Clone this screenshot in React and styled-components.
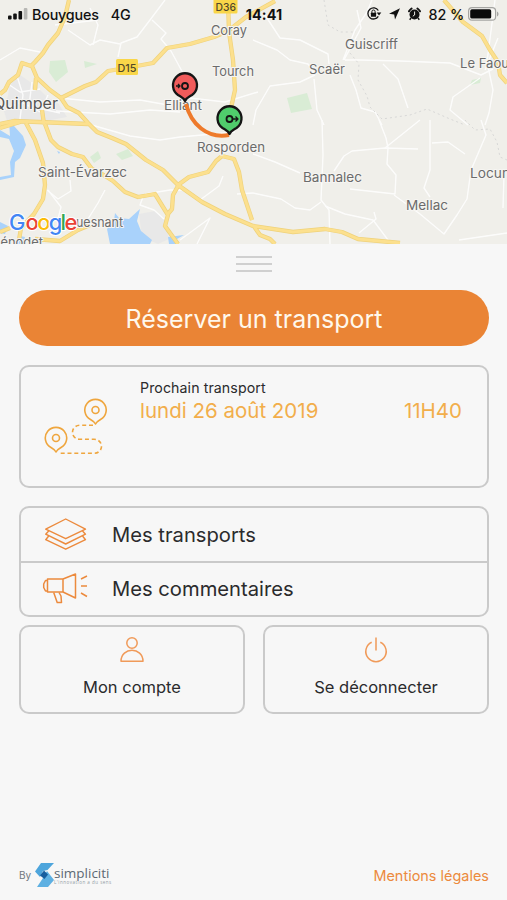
import React from "react";
import styled, { createGlobalStyle } from "styled-components";

const GlobalStyle = createGlobalStyle`
  * { box-sizing: border-box; }
  body { margin: 0; background: #f7f7f7; font-family: Inter, "Liberation Sans", sans-serif; }
  button { font: inherit; color: inherit; background: none; border: 0; padding: 0; margin: 0; }
`;

const Screen = styled.div`
  width: 507px;
  height: 900px;
  overflow: hidden;
  display: flex;
  flex-direction: column;
  background: #f7f7f7;
  color: #2b2b2d;
`;

const MapArea = styled.header`
  position: relative;
  height: 244px;
  flex: none;
  overflow: hidden;
  background: #f0efea;
`;

const MapSvg = styled.svg`
  display: block;
  text { font-family: Inter, "Liberation Sans", sans-serif; }
`;

const StatusBar = styled.div`
  position: absolute;
  inset: 0 0 auto 0;
  height: 28px;
  padding: 0 8px;
  display: grid;
  grid-template-columns: 1fr auto 1fr;
  align-items: center;
  color: #111;
  font-size: 14.3px;
  font-weight: 500;
`;

const StatusGroup = styled.div`
  display: flex;
  align-items: center;
  justify-content: ${(p) => (p.$end ? "flex-end" : "flex-start")};
  svg { flex: none; display: block; }
`;

const Carrier = styled.span`
  margin-left: 4px;
  letter-spacing: -0.18px;
`;

const Network = styled.span`
  margin-left: 12px;
`;

const Clock = styled.span`
  font-weight: 700;
  letter-spacing: 0.15px;
  padding-left: 21px;
`;

const Battery = styled.span`
  margin: 0 4px 0 7px;
  letter-spacing: -0.1px;
  white-space: nowrap;
`;

const Sheet = styled.main`
  flex: 1;
  display: flex;
  flex-direction: column;
  padding: 12px 18px 0 19px;
`;

const Handle = styled.div`
  align-self: center;
  width: 36px;
  height: 16px;
  display: flex;
  flex-direction: column;
  justify-content: space-between;
`;

const HandleLine = styled.span`
  height: 2px;
  background: #d0d0d0;
`;

const BookButton = styled.button`
  margin-top: 18px;
  height: 56px;
  flex: none;
  border-radius: 28px;
  background: #ea8435;
  color: #fff8ec;
  font-size: 25px;
  letter-spacing: ${(p) => p.$track};
  display: flex;
  align-items: center;
  justify-content: center;
  padding-top: 1px;
`;

const Panel = styled.section`
  border: 2px solid #cacaca;
  border-radius: 10px;
  flex: none;
`;

const NextTrip = styled(Panel)`
  margin-top: 19px;
  height: 123px;
  display: flex;
  padding: 11px 25px 0 23px;
`;

const TripIcon = styled.div`
  width: 96px;
  padding-top: 20px;
`;

const TripInfo = styled.div`
  flex: 1;
`;

const TripCaption = styled.div`
  font-size: 14.2px;
  line-height: 20px;
  letter-spacing: 0.08px;
`;

const TripLine = styled.div`
  display: flex;
  justify-content: space-between;
  color: #f2ae4b;
  font-size: 20.5px;
  line-height: 26px;
  letter-spacing: ${(p) => p.$track};
`;

const MenuPanel = styled(Panel)`
  margin-top: 18px;
  height: 111px;
  display: flex;
  flex-direction: column;
`;

const MenuRow = styled.button`
  flex: 1;
  display: flex;
  align-items: center;
  text-align: left;
  font-size: 20.2px;
  letter-spacing: ${(p) => p.$track};
  & + & { border-top: 2px solid #cacaca; }
`;

const MenuIcon = styled.span`
  width: 91px;
  padding-left: 20px;
  svg { display: block; }
`;

const TileRow = styled.div`
  display: grid;
  grid-template-columns: 1fr 1fr;
  gap: 18px;
  margin-top: 8px;
`;

const Tile = styled.button`
  height: 89px;
  border: 2px solid #cacaca;
  border-radius: 10px;
  display: flex;
  flex-direction: column;
  align-items: center;
  font-size: 16.5px;
  letter-spacing: ${(p) => p.$track};
  padding-top: 9px;
  svg { display: block; margin-bottom: 12px; }
`;

const Footer = styled.footer`
  margin-top: auto;
  height: 50px;
  display: flex;
  align-items: center;
  justify-content: space-between;
`;

const Brand = styled.div`
  display: flex;
  align-items: center;
  font-size: 10px;
  color: #707780;
`;

const BrandName = styled.div`
  display: flex;
  flex-direction: column;
  color: #5d6974;
  font-family: "Open Sans", sans-serif;
  font-size: 13.5px;
  line-height: 14px;
`;

const Tagline = styled.span`
  font-size: 4.5px;
  line-height: 5px;
  letter-spacing: 0.5px;
  color: #929ca5;
`;

const Legal = styled.a`
  color: #ec8a3d;
  font-size: 14.4px;
  letter-spacing: 0.03px;
`;

const minorRoads = [
  "M68 30L90 45L100 40L120 44M93 45L98 25L90 8",
  "M118 57L121 43L137 37L150 20L165 0M152 20L166 33L161 39L171 51L184 75",
  "M0 60L20 48L40 52M60 98L100 102L140 100L168 105L190 98L225 102L258 92",
  "M56 111L110 114L150 110L180 112M88 124L130 136L160 140L180 137L235 132",
  "M253 40L277 50L290 60L308 64L314 73M265 15L280 38L300 40L328 54L329 64",
  "M343 60L355 30L367 12L372 0M344 60L361 28L357 10M315 75L300 82L270 86L256 110L253 125",
  "M314 79L317 110L324 125M350 75L356 90L361 108L375 112L382 125M345 60L360 60L400 61L450 63L481 75L493 69",
  "M383 64L398 79L408 108M495 0L487 62L493 90L489 113L485 125M480 78L453 97L450 110L468 125",
  "M498 38L485 70M322 120L323 155L321 200L329 210L330 244M253 154L275 162L300 173M334 171L344 156L352 151L385 148L418 149",
  "M379 120L386 138L388 148L387 164L396 175L395 194L350 189M253 193L281 199L295 208L310 210L321 202",
  "M325 206L345 214L373 220L391 244M374 212L376 219L359 233M394 195L420 214L444 234L457 215L467 199L471 170L486 135L481 120",
  "M385 148L420 120M430 120L430 170L424 188L430 197M432 143L448 142L465 154M459 240L507 233M504 175L503 208",
  "M237 194L253 193M200 200L219 186L223 176M144 194L140 205L154 210L164 219M145 194L170 190L184 190M47 190L58 199L71 191L70 180",
  "M105 190L98 203L88 219L65 224M48 190L61 207L58 219M180 240L210 218L197 244M98 20L55 25",
];

const mainRoads = [
  "M69 0L65 17L58 33L48 45L43 53L35 62L31 66L22 63L18 75L9 82L5 90L0 94",
  "M32 66L37 78L50 90L61 98L67 107L79 113L88 123L97 132L112 138L126 144L146 160L163 170L178 185L202 202L225 214L253 226",
  "M61 98L75 91L85 86L96 82L108 71L126 68L153 63L167 48L190 44L214 37L228 31L246 17L275 1",
  "M228 0L229 32L233 60L235 90L231 108",
  "M36 78L35 90M0 124L14 121L88 124M0 128L20 122",
  "M45 124L51 140L58 147L72 154L83 157L92 169L102 174L113 181L125 192L138 197L155 194L163 207L168 215L165 226L178 244",
  "M26 123L35 140L43 163L45 185L43 199L34 214L21 228L19 240",
  "M178 186L173 195L172 209L167 215M178 185L189 177L208 172L216 161L222 156L234 159L239 172L242 190L252 220",
  "M253 226L293 232L325 229L342 232L358 239L400 243M253 225L260 235L270 239L275 244",
  "M444 0L463 22L482 36L490 50L498 62L500 75L507 83",
  "M0 232L10 228M35 239L60 241L78 230L90 225M42 110L44 124",
];

const labels = [
  { x: 211, y: 35, w: 36, t: "Coray" },
  { x: 212, y: 76, w: 42, t: "Tourch" },
  { x: 345, y: 49, w: 53, t: "Guiscriff" },
  { x: 309, y: 74, w: 36, t: "Scaër" },
  { x: 460, y: 68, w: 49, t: "Le Faou" },
  { x: 164, y: 110, w: 38, t: "Elliant" },
  { x: 197, y: 152, w: 68, t: "Rosporden" },
  { x: 38, y: 177, w: 89, t: "Saint-Évarzec" },
  { x: 303, y: 182, w: 59, t: "Bannalec" },
  { x: 406, y: 210, w: 42, t: "Mellac" },
  { x: 470, y: 178, w: 40, t: "Locun" },
  { x: 76, y: 227, w: 47, t: "uesnant" },
  { x: -8, y: 247, w: 51, t: "Bénodet" },
];

const googleLetters = [
  ["G", 9, "#4285f4"],
  ["o", 25.6, "#ea4335"],
  ["o", 37.3, "#fbbc05"],
  ["g", 48.8, "#4285f4"],
  ["l", 60.4, "#34a853"],
  ["e", 64.6, "#ea4335"],
];

function Pin({ x, y, fill, arrow }) {
  return (
    <g transform={`translate(${x} ${y})`} stroke="#151515" strokeLinejoin="round">
      <path
        d="M0 15C-1.5 11.5-4 11-7 9A12 12 0 1 1 7 9C4 11 1.500 11.500 0 15Z"
        fill={fill}
        strokeWidth="2.300"
      />
      <circle cx="0" cy="0" r="3" fill="none" strokeWidth="1.800" />
      <path d={arrow} fill="none" strokeWidth="1.300" />
    </g>
  );
}

function RegionMap() {
  return (
    <MapSvg width="507" height="244" viewBox="0 0 507 244">
      <g fill="#d9ecd5">
        <path d="M50 61L65 60L68 72L56 82L49 72ZM84 61L97 64L85 68ZM287 98L307 93L312 109L291 113ZM472 80L481 78L480 83L470 85Z" />
        <path d="M90 157L98 151L101 158L94 163ZM116 154L128 149L133 156L122 160Z" />
      </g>
      <g fill="#e8e8e8">
        <path d="M10 82L20 75L36 86L48 98L58 103L67 117L40 122L8 124L3 108L8 96Z" />
        <path d="M139 214L155 211L166 222L169 239L158 244L142 237Z" />
      </g>
      <g fill="#a9d2fb">
        <path d="M9 120L14 126L23 136L26 145L20 158L15 162L14 177L0 180V177L11 175L10 162L14 151L9 139L0 137V130L10 136Z" />
        <path d="M107 229L114 221L115 213L119 218L129 219L140 209L137 221L141 231L152 240L150 244H110Z" />
        <path d="M0 222L8 226L5 234L0 233ZM20 236L25 237L23 244H18ZM168 237L184 235L177 239L175 244H169ZM57 151L60 152L59 154Z" />
      </g>
      <g fill="none" stroke="#fff" strokeWidth="1.400" opacity="0.850" strokeLinejoin="round">
        {minorRoads.map((d) => <path key={d} d={d} />)}
        <path d="M8 84L20 92L40 89M6 109L21 102L36 110M17 76L23 95L20 119M32 82L29 106L42 113M48 95L42 109L60 113" />
      </g>
      <g fill="none" stroke="#d8d8d7" strokeWidth="1" strokeDasharray="2 3">
        <path d="M324 0L328 25L340 32L356 32M350 53L359 64L358 80L367 96L370 107L382 119L410 115L427 109L450 119L465 125M465 120L475 130L490 129L497 142L500 157L507 160" />
      </g>
      <g fill="none" stroke="#efd27b" strokeWidth="4.300" strokeLinejoin="round">
        {mainRoads.map((d) => <path key={d} d={d} />)}
      </g>
      <g fill="none" stroke="#fce08e" strokeWidth="2.900" strokeLinejoin="round">
        {mainRoads.map((d) => <path key={d} d={d} />)}
      </g>
      <g fill="#f9d649">
        <rect x="116" y="59" width="22" height="16" rx="1.500" />
        <rect x="213.500" y="-3" width="24" height="16.500" rx="1.500" />
      </g>
      <g fill="#51482a" fontSize="11" fontWeight="500">
        <text x="117.500" y="71.500" textLength="19" lengthAdjust="spacingAndGlyphs">D15</text>
        <text x="215.500" y="10.500" textLength="20.500" lengthAdjust="spacingAndGlyphs">D36</text>
      </g>
      <g fill="#6b6b6b" fontSize="13" stroke="#f6f5f2" strokeWidth="2" paintOrder="stroke">
        {labels.map((l) => (
          <text key={l.t} x={l.x} y={l.y} textLength={l.w} lengthAdjust="spacingAndGlyphs">{l.t}</text>
        ))}
        <text x="-7" y="109" fontSize="15.500" fill="#555" textLength="65" lengthAdjust="spacingAndGlyphs">Quimper</text>
      </g>
      <path d="M186 104C191 124 207 139 229 135" fill="none" stroke="#ee7a2b" strokeWidth="4" />
      <Pin x={185} y={86} fill="#f15b5b" arrow="M-9 0H-5M-7 -2L-5 0L-7 2" />
      <Pin x={229.500} y={119} fill="#50cd6c" arrow="M3 0H8M6 -2.500L8.500 0L6 2.500" />
      <g fontSize="22" fontWeight="500" stroke="#fff" strokeWidth="2" paintOrder="stroke">
        {googleLetters.map(([c, x, fill]) => (
          <text key={x} x={x} y="230" fill={fill} style={undefined}>{c}</text>
        ))}
      </g>
    </MapSvg>
  );
}

function SignalIcon() {
  return (
    <svg width="20" height="12" viewBox="0 0 20 12" fill="#111">
      <rect x="0" y="7.500" width="3.600" height="4" rx="1" />
      <rect x="5.200" y="5.500" width="3.600" height="6" rx="1" />
      <rect x="10.500" y="3" width="3.600" height="8.500" rx="1" />
      <rect x="15.800" y="0" width="3.600" height="11.500" rx="1" fill="#b7b7b4" />
    </svg>
  );
}

function StatusIcons() {
  return (
    <svg width="56" height="16" viewBox="0 0 56 16">
      <path d="M12.300 4.500A5.600 5.600 0 1 0 12.300 10.300" fill="none" stroke="#111" strokeWidth="1.300" />
      <path d="M10.700 6.500H15.300L13 9.500Z" fill="#111" />
      <rect x="4.900" y="6.700" width="5.200" height="4" rx="0.500" fill="#111" />
      <path d="M5.900 7V5.600A1.600 1.600 0 0 1 9.100 5.600V7" fill="none" stroke="#111" strokeWidth="1" />
      <path d="M34 2.200L23 7.800L28.200 8.500L29 13.500Z" fill="#111" />
      <circle cx="48.500" cy="8.500" r="5" fill="#111" />
      <path d="M43 5.300A9 9 0 0 1 45.600 2.500M54 5.300A9 9 0 0 0 51.400 2.500" fill="none" stroke="#111" strokeWidth="2" strokeLinecap="round" />
      <path d="M48.600 5.500V9L46.800 10.200" fill="none" stroke="#f0efea" strokeWidth="1" />
      <path d="M45 12L43.700 13.700M52 12L53.300 13.700" stroke="#111" strokeWidth="1.400" />
    </svg>
  );
}

function BatteryIcon() {
  return (
    <svg width="31" height="14" viewBox="0 0 31 14">
      <rect x="0.600" y="0.600" width="27" height="12.600" rx="3.500" fill="#f7f6f2" stroke="#a5a5a2" strokeWidth="1.200" />
      <rect x="2.200" y="2.300" width="21" height="9.300" rx="1.700" fill="#0b0b0b" />
      <path d="M29 4.500C31 5.300 31 8.700 29 9.500Z" fill="#a5a5a2" />
    </svg>
  );
}

function RouteIcon() {
  return (
    <svg width="64" height="58" viewBox="0 0 64 58" fill="none" stroke="#efa63e" strokeWidth="1.600" strokeLinejoin="round">
      <path d="M51.500 26C50.500 23.600 48.500 22.700 46.500 21.500A10.700 10.700 0 1 1 56.500 21.500C54.500 22.700 52.500 23.600 51.500 26Z" />
      <circle cx="51.500" cy="12" r="3.500" />
      <path d="M12 54C11 51.600 9 50.700 7 49.500A10.700 10.700 0 1 1 17 49.500C15 50.700 13 51.600 12 54Z" />
      <circle cx="12" cy="40" r="3.500" />
      <path d="M49 27.300H36C26 27.300 26 41.300 36 41.300H50C60 41.300 60 55.300 50 55.300H14" strokeDasharray="4 2.800" />
    </svg>
  );
}

function LayersIcon() {
  return (
    <svg width="48" height="34" viewBox="0 0 48 34" fill="none" stroke="#ec8a3d" strokeWidth="1.400" strokeLinejoin="round">
      <path d="M24.700 2L44.500 12.200L24.700 21.700L4.700 12.200Z" />
      <path d="M7.700 14L4.700 17.200L24.700 27L44.500 17.200L41.500 14" />
      <path d="M7.700 19L4.700 22.700L24.700 32.200L44.500 22.700L41.500 19" />
    </svg>
  );
}

function MegaphoneIcon() {
  return (
    <svg width="48" height="34" viewBox="0 0 48 34" fill="none" stroke="#ec8a3d" strokeWidth="1.500" strokeLinejoin="round">
      <path d="M6.500 7H22L34.500 2V26L22 20H6.500ZM22 7V20M6.500 8.500H4.500L2.700 12V15.500L4.500 19H6.500" />
      <path d="M12.700 20.500L16.200 30.500H20.500L20 24L18 20.500" />
      <path d="M40 7L46 4M40 14H46M40 21L46 24.500" />
    </svg>
  );
}

function UserIcon() {
  return (
    <svg width="26" height="29" viewBox="0 0 26 29" fill="none" stroke="#f09a59" strokeWidth="1.500" strokeLinejoin="round">
      <circle cx="13" cy="7" r="5.200" />
      <path d="M2 25.300C2 10.700 24 10.700 24 25.300Z" />
    </svg>
  );
}

function PowerIcon() {
  return (
    <svg width="26" height="29" viewBox="0 0 26 29" fill="none" stroke="#f09a59" strokeWidth="1.500">
      <path d="M13 1.500V14.500M8.700 6.200A10.200 10.200 0 1 0 17.300 6.200" />
    </svg>
  );
}

function BrandMark() {
  return (
    <svg width="20" height="26" viewBox="0 0 20 26">
      <path d="M7 1H20L13.500 8L9 9L6 15L1 9.500Z" fill="#4da5dc" />
      <path d="M3 25H14L20 18L13 9L9 16Z" fill="#5eb0e2" />
      <path d="M10 8.500L14 12.500L10.500 17L6 13.500Z" fill="#175e9f" />
    </svg>
  );
}

export default function App() {
  return (
    <>
      <GlobalStyle />
      <Screen>
        <MapArea>
          <RegionMap />
          <StatusBar>
            <StatusGroup>
              <SignalIcon />
              <Carrier>Bouygues</Carrier>
              <Network>4G</Network>
            </StatusGroup>
            <Clock>14:41</Clock>
            <StatusGroup $end>
              <StatusIcons />
              <Battery>82 %</Battery>
              <BatteryIcon />
            </StatusGroup>
          </StatusBar>
        </MapArea>
        <Sheet>
          <Handle>
            <HandleLine />
            <HandleLine />
            <HandleLine />
          </Handle>
          <BookButton $track="0px">Réserver un transport</BookButton>
          <NextTrip>
            <TripIcon><RouteIcon /></TripIcon>
            <TripInfo>
              <TripCaption>Prochain transport</TripCaption>
              <TripLine $track="0px">
                <span>lundi 26 août 2019</span>
                <span>11H40</span>
              </TripLine>
            </TripInfo>
          </NextTrip>
          <MenuPanel>
            <MenuRow $track="0px">
              <MenuIcon><LayersIcon /></MenuIcon>
              Mes transports
            </MenuRow>
            <MenuRow $track="0px">
              <MenuIcon><MegaphoneIcon /></MenuIcon>
              Mes commentaires
            </MenuRow>
          </MenuPanel>
          <TileRow>
            <Tile $track="0px"><UserIcon />Mon compte</Tile>
            <Tile $track="0px"><PowerIcon />Se déconnecter</Tile>
          </TileRow>
          <Footer>
            <Brand>
              By&nbsp;
              <BrandMark />
              <BrandName>
                simpliciti
                <Tagline>L'innovation a du sens</Tagline>
              </BrandName>
            </Brand>
            <Legal>Mentions légales</Legal>
          </Footer>
        </Sheet>
      </Screen>
    </>
  );
}
